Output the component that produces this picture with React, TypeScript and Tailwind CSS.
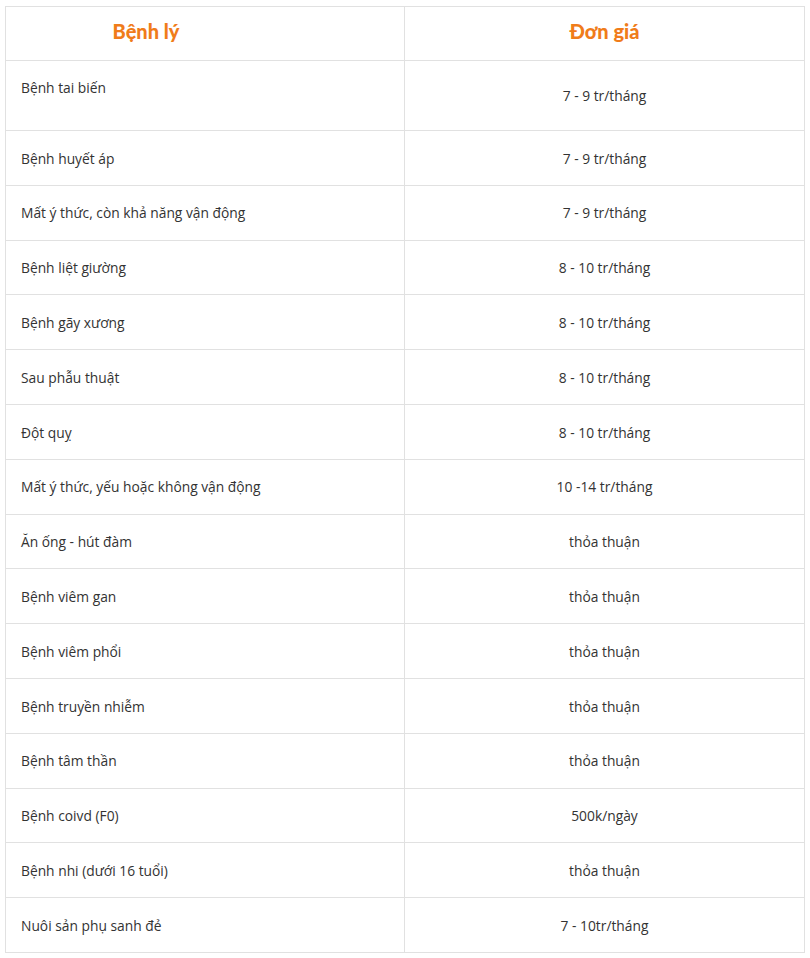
const rows: { name: string; price: string }[] = [
  { name: "Bệnh tai biến", price: "7 - 9 tr/tháng" },
  { name: "Bệnh huyết áp", price: "7 - 9 tr/tháng" },
  { name: "Mất ý thức, còn khả năng vận động", price: "7 - 9 tr/tháng" },
  { name: "Bệnh liệt giường", price: "8 - 10 tr/tháng" },
  { name: "Bệnh gãy xương", price: "8 - 10 tr/tháng" },
  { name: "Sau phẫu thuật", price: "8 - 10 tr/tháng" },
  { name: "Đột quỵ", price: "8 - 10 tr/tháng" },
  { name: "Mất ý thức, yếu hoặc không vận động", price: "10 -14 tr/tháng" },
  { name: "Ăn ống - hút đàm", price: "thỏa thuận" },
  { name: "Bệnh viêm gan", price: "thỏa thuận" },
  { name: "Bệnh viêm phổi", price: "thỏa thuận" },
  { name: "Bệnh truyền nhiễm", price: "thỏa thuận" },
  { name: "Bệnh tâm thần", price: "thỏa thuận" },
  { name: "Bệnh coivd (F0)", price: "500k/ngày" },
  { name: "Bệnh nhi (dưới 16 tuổi)", price: "thỏa thuận" },
  { name: "Nuôi sản phụ sanh đẻ", price: "7 - 10tr/tháng" },
];

export default function App() {
  return (
    <div className="bg-white px-[5px] pt-[6px] font-['Open_Sans',sans-serif] text-[13.8px] text-[#333]">
      <table className="w-[800px] table-fixed border-collapse">
        <thead>
          <tr className="h-[54px]">
            <th className="w-[399px] border border-[#e1e1e1] pr-[118px] pb-[5px] text-center font-['Lato',sans-serif] text-[20px] font-black text-[#f07c1a]">
              Bệnh lý
            </th>
            <th className="border border-[#e1e1e1] pb-[5px] text-center font-['Lato',sans-serif] text-[20px] font-black text-[#f07c1a]">
              Đơn giá
            </th>
          </tr>
        </thead>
        <tbody>
          {rows.map((r, i) => (
            <tr key={r.name} className={i === 0 ? "h-[70px]" : "h-[54.8px]"}>
              <td className={`border border-[#e1e1e1] pl-[15px] pr-4 pt-[2px] align-middle ${i === 0 ? "pb-[16px]" : ""}`}>
                {r.name}
              </td>
              <td className="border border-[#e1e1e1] px-4 pt-[2px] text-center align-middle">{r.price}</td>
            </tr>
          ))}
        </tbody>
      </table>
    </div>
  );
}
